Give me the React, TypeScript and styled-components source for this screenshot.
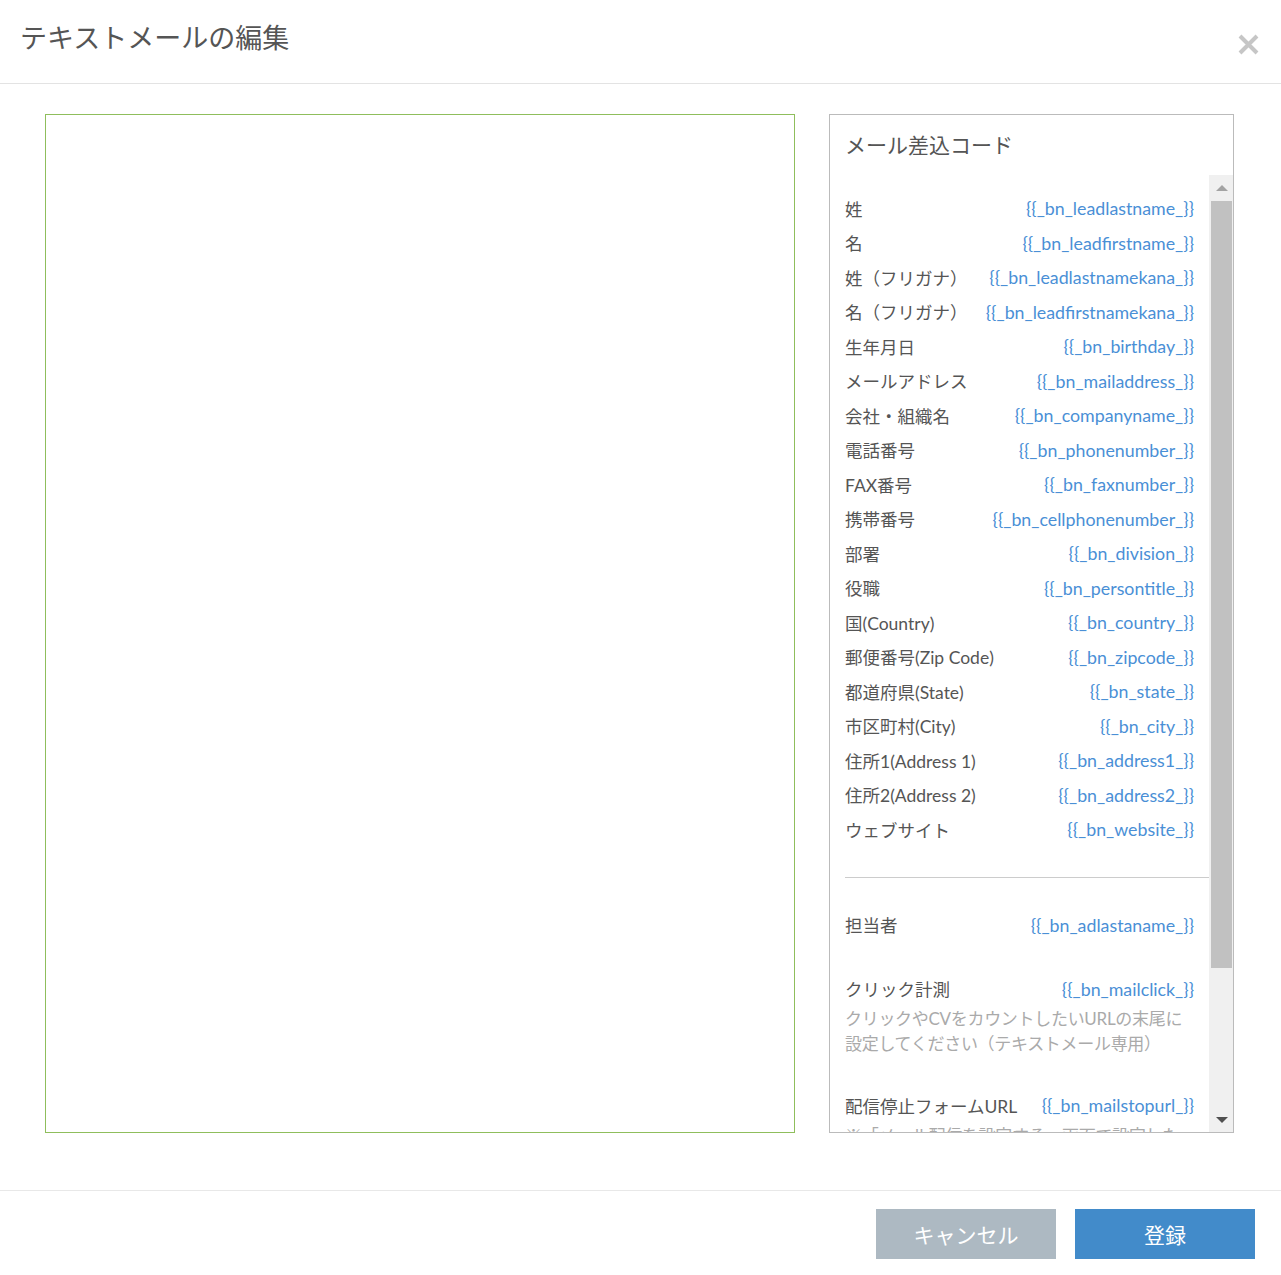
import React from "react";
import styled, { createGlobalStyle } from "styled-components";

const GlobalStyle = createGlobalStyle`
  html, body { margin: 0; padding: 0; background: #fff; }
  body { font-family: "Lato", "Noto Sans CJK JP", sans-serif; color: #555; }
  * { box-sizing: border-box; }
`;

const Page = styled.div`
  width: 1281px;
  height: 1275px;
  display: flex;
  flex-direction: column;
  background: #fff;
`;

const Header = styled.div`
  position: relative;
  height: 84px;
  border-bottom: 1px solid #e3e3e3;
  padding: 20px 0 0 20px;
`;

const Title = styled.h1`
  margin: 0;
  font-size: 27px;
  line-height: 36px;
  font-weight: 400;
  color: #555;
`;

const CloseButton = styled.button`
  position: absolute;
  right: 21px;
  top: 33px;
  width: 23px;
  height: 23px;
  padding: 0;
  border: none;
  background: transparent;
  cursor: pointer;
  display: flex;
  align-items: center;
  justify-content: center;
`;

const Body = styled.div`
  display: flex;
  gap: 34px;
  padding: 30px 47px 57px 45px;
`;

const Editor = styled.textarea`
  width: 750px;
  height: 1019px;
  border: 1px solid #8fbe5c;
  resize: none;
  outline: none;
  padding: 10px;
  font-family: "Lato", "Noto Sans CJK JP", sans-serif;
  font-size: 16px;
  color: #555;
`;

const Panel = styled.div`
  width: 405px;
  height: 1019px;
  border: 1px solid #bbb;
  display: flex;
  flex-direction: column;
`;

const PanelTitle = styled.div`
  height: 60px;
  padding: 16px 0 0 15px;
  font-size: 21px;
  line-height: 28px;
  color: #555;
`;

const ScrollArea = styled.div`
  flex: 1;
  min-height: 0;
  display: flex;
`;

const Content = styled.div`
  flex: 1;
  overflow: hidden;
  padding-left: 15px;
`;

const ScrollBar = styled.div`
  width: 24px;
  background: #f0f0f0;
  display: flex;
  flex-direction: column;
`;

const ArrowButton = styled.div`
  height: 25px;
  display: flex;
  align-items: center;
  justify-content: center;
  padding-left: 1px;
`;

const Thumb = styled.div`
  height: 767px;
  margin: 1px 1px 0 2px;
  background: #c1c1c1;
`;

const TrackRest = styled.div`
  flex: 1;
`;

const Group = styled.div<{ $top: number }>`
  padding-top: ${(p) => p.$top}px;
`;

const Row = styled.div`
  display: flex;
  justify-content: space-between;
  align-items: center;
  padding-right: 15px;
  height: 34.5px;
  font-size: 17.5px;
  white-space: nowrap;
`;

const Label = styled.span`
  color: #555;
`;

const Code = styled.span`
  color: #4a8fd6;
  font-size: 17.8px;
`;

const Note = styled.div`
  padding-right: 15px;
  font-size: 17px;
  line-height: 25px;
  color: #aaa;
  letter-spacing: -0.3px;
  white-space: nowrap;
`;

const Divider = styled.hr`
  margin: 30px 0 0 0;
  border: none;
  border-top: 1px solid #ccc;
  height: 0;
`;

const Footer = styled.div`
  border-top: 1px solid #e8e8e8;
  display: flex;
  justify-content: flex-end;
  gap: 19px;
  padding: 18px 26px 16px 0;
`;

const Button = styled.button<{ $variant: "cancel" | "primary" }>`
  width: 180px;
  height: 50px;
  border: none;
  color: #fff;
  font-family: "Lato", "Noto Sans CJK JP", sans-serif;
  font-size: 21px;
  background: ${(p) => (p.$variant === "primary" ? "#428bca" : "#adb9c2")};
  cursor: pointer;
`;

const fields: [string, string][] = [
  ["姓", "{{_bn_leadlastname_}}"],
  ["名", "{{_bn_leadfirstname_}}"],
  ["姓（フリガナ）", "{{_bn_leadlastnamekana_}}"],
  ["名（フリガナ）", "{{_bn_leadfirstnamekana_}}"],
  ["生年月日", "{{_bn_birthday_}}"],
  ["メールアドレス", "{{_bn_mailaddress_}}"],
  ["会社・組織名", "{{_bn_companyname_}}"],
  ["電話番号", "{{_bn_phonenumber_}}"],
  ["FAX番号", "{{_bn_faxnumber_}}"],
  ["携帯番号", "{{_bn_cellphonenumber_}}"],
  ["部署", "{{_bn_division_}}"],
  ["役職", "{{_bn_persontitle_}}"],
  ["国(Country)", "{{_bn_country_}}"],
  ["郵便番号(Zip Code)", "{{_bn_zipcode_}}"],
  ["都道府県(State)", "{{_bn_state_}}"],
  ["市区町村(City)", "{{_bn_city_}}"],
  ["住所1(Address 1)", "{{_bn_address1_}}"],
  ["住所2(Address 2)", "{{_bn_address2_}}"],
  ["ウェブサイト", "{{_bn_website_}}"],
];

export default function App() {
  return (
    <Page>
      <GlobalStyle />
      <Header>
        <Title>テキストメールの編集</Title>
        <CloseButton aria-label="閉じる">
          <svg width="21" height="21" viewBox="0 0 21 21">
            <path d="M2 2 L19 19 M19 2 L2 19" stroke="#c6c6c6" strokeWidth="4" strokeLinecap="butt" />
          </svg>
        </CloseButton>
      </Header>
      <Body>
        <Editor />
        <Panel>
          <PanelTitle>メール差込コード</PanelTitle>
          <ScrollArea>
            <Content>
              <Group $top={16}>
                {fields.map(([label, code]) => (
                  <Row key={code}>
                    <Label>{label}</Label>
                    <Code>{code}</Code>
                  </Row>
                ))}
              </Group>
              <Divider />
              <Group $top={30}>
                <Row>
                  <Label>担当者</Label>
                  <Code>{"{{_bn_adlastaname_}}"}</Code>
                </Row>
              </Group>
              <Group $top={29.5}>
                <Row>
                  <Label>クリック計測</Label>
                  <Code>{"{{_bn_mailclick_}}"}</Code>
                </Row>
                <Note>
                  クリックやCVをカウントしたいURLの末尾に
                  <br />
                  設定してください（テキストメール専用）
                </Note>
              </Group>
              <Group $top={32}>
                <Row>
                  <Label>配信停止フォームURL</Label>
                  <Code>{"{{_bn_mailstopurl_}}"}</Code>
                </Row>
                <Note>
                  ※「メール配信を設定する」画面で設定した
                  <br />
                  配信停止フォームのURLが挿入されます
                </Note>
              </Group>
            </Content>
            <ScrollBar>
              <ArrowButton>
                <svg width="12" height="6" viewBox="0 0 12 6">
                  <path d="M0 6 L6 0 L12 6 Z" fill="#a3a3a3" />
                </svg>
              </ArrowButton>
              <Thumb />
              <TrackRest />
              <ArrowButton>
                <svg width="12" height="6" viewBox="0 0 12 6">
                  <path d="M0 0 L12 0 L6 6 Z" fill="#505050" />
                </svg>
              </ArrowButton>
            </ScrollBar>
          </ScrollArea>
        </Panel>
      </Body>
      <Footer>
        <Button $variant="cancel">キャンセル</Button>
        <Button $variant="primary">登録</Button>
      </Footer>
    </Page>
  );
}
